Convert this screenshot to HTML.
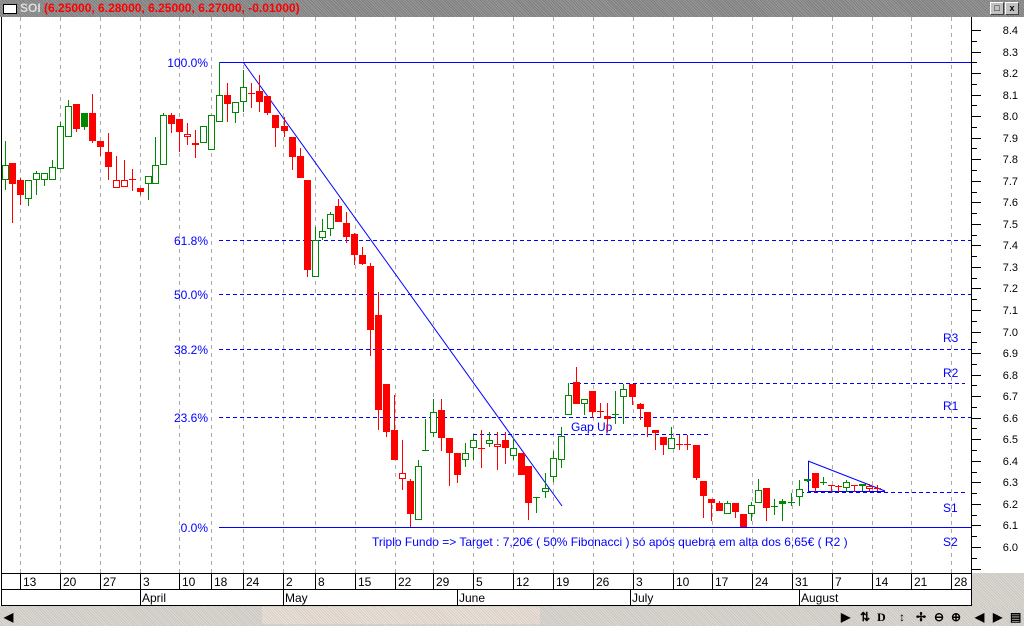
<!DOCTYPE html>
<html><head><meta charset="utf-8"><style>
*{margin:0;padding:0}
body{width:1024px;height:626px;overflow:hidden;background:#fff;font-family:"Liberation Sans",sans-serif;position:relative}
.tb{position:absolute;left:0;top:0;width:1024px;height:17px;background:#8a8a8a;background-image:repeating-linear-gradient(45deg,#9a9a9a 0 1px,#7c7c7c 1px 2px)}
.tb .ic{position:absolute;left:3px;top:4px;width:12px;height:8px;background:#fff;border:1px solid #000}
.tb .t{position:absolute;left:20px;top:1px;font-size:12px;font-weight:bold;color:#ddd;white-space:pre}
.tb .t span{color:#f00}
.btn{position:absolute;top:2px;width:12px;height:11px;background:#c0c0c0;border:1px solid;border-color:#fff #404040 #404040 #fff;font-size:9px;font-weight:bold;text-align:center;line-height:11px}
.gray{position:absolute;background:#d6d2cc;background-image:repeating-linear-gradient(45deg,#ddd9d3 0 1px,#c9c5c0 1px 2px)}
.tool{position:absolute;top:610px;font-size:12px;font-weight:bold}
</style></head><body>
<div class="tb"><div class="ic"></div><div class="t">SOI <span>(6.25000, 6.28000, 6.25000, 6.27000, -0.01000)</span></div>
<div class="btn" style="left:990px">&#9633;</div><div class="btn" style="left:1005px">x</div></div>
<div class="gray" style="left:972px;top:573px;width:52px;height:33px"></div>
<div class="gray" style="left:0;top:606px;width:1024px;height:20px"></div>
<div style="position:absolute;left:262px;top:607px;width:278px;height:17px;background:#e4d8d4;background-image:repeating-linear-gradient(45deg,#ece4d8 0 1px,#d8ccc8 1px 2px)"></div>
<svg id="s" width="1024" height="626" style="position:absolute;left:0;top:0" xmlns="http://www.w3.org/2000/svg"></svg>
<div class="tool" style="left:4px">&#9664;</div>
<div class="tool" style="left:841px">&#9654;</div>
<div class="tool" style="left:860px">&#8645;</div>
<div class="tool" style="left:877px;font-family:'Liberation Serif',serif">D</div>
<div class="tool" style="left:899px">&#8597;</div>
<div class="tool" style="left:916px">&#10018;</div>
<div class="tool" style="left:934px">&#8854;</div>
<div class="tool" style="left:951px">&#8853;</div>
<div class="tool" style="left:975px">&#9664;</div>
<div class="tool" style="left:993px">&#9654;</div>
<div class="tool" style="left:1010px">&#9636;</div>
<script>
var s=document.getElementById('s'),h='';
function L(x1,y1,x2,y2,c,w,d){h+='<line x1="'+x1+'" y1="'+y1+'" x2="'+x2+'" y2="'+y2+'" stroke="'+c+'" stroke-width="'+(w||1)+'"'+(d?' stroke-dasharray="'+d+'"':'')+' shape-rendering="crispEdges"/>';}
function T(x,y,t,c,sz,a){h+='<text x="'+x+'" y="'+y+'" fill="'+c+'" font-size="'+(sz||11)+'" font-family="Liberation Sans,sans-serif"'+(a?' text-anchor="'+a+'"':'')+'>'+t+'</text>';}
var gx=[20,60,100,140,179,211,243,283,315,355,395,433,473,513,553,593,633,673,712,752,792,832,872,911,951];
gx.forEach(function(x){L(x+.5,17,x+.5,573,'#aaa',1,'4 4');});
L(1.5,17,1.5,606,'#000');
L(219,62.5,972,62.5,'#00f');L(219,527.5,972,527.5,'#00f');
[240,294,349,417].forEach(function(y){L(219,y+.5,972,y+.5,'#00f',1,'4 3');});
L(570,383.5,965,383.5,'#00f',1,'4 3');L(473,434.5,710,434.5,'#00f',1,'4 3');L(800,492.5,965,492.5,'#00f',1,'4 3');
[['100.0%',67],['61.8%',245],['50.0%',299],['38.2%',354],['23.6%',422],['0.0%',532]].forEach(function(a){T(208,a[1],a[0],'#00f',12,'end');});
[['R3',342],['R2',377],['R1',410],['S1',512],['S2',546]].forEach(function(a){T(943,a[1],a[0],'#00f',12);});
T(571,431,'Gap Up','#00f',12);
T(372,546,'Triplo Fundo =&gt; Target : 7,20€ ( 50% Fibonacci ) só após quebra em alta dos 6,65€ ( R2 )','#00f',12);
h+='<line x1="243" y1="62" x2="562" y2="506" stroke="#00f" stroke-width="1"/>';
h+='<line x1="808" y1="461" x2="885" y2="491" stroke="#00f" stroke-width="1"/>';
L(808,491.5,885,491.5,'#00f');L(808.5,461,808.5,491,'#00f');
var C=[[5,165,180,141,190,'g'],[12,163,184,163,223,'r'],[20,180,195,178,205,'r'],[28,199,180,180,206,'g'],[36,180,173,171,195,'g'],[44,180,173,173,186,'g'],[52,180,167,160,180,'g'],[60,169,126,122,169,'g'],[68,137,106,100,137,'g'],[76,104,129,104,132,'r'],[84,113,127,113,130,'gf'],[92,113,141,94,143,'r'],[100,141,147,141,156,'r'],[108,152,167,133,180,'r'],[116,180,188,156,188,'rh'],[124,180,187,160,187,'rh'],[132,179,179,169,191,'r'],[140,188,192,188,195,'r'],[148,184,176,176,200,'g'],[155,184,165,137,184,'g'],[163,165,115,113,165,'g'],[171,115,124,113,133,'r'],[179,119,132,119,152,'r'],[187,134,137,123,145,'rh'],[195,143,145,130,158,'rh'],[203,143,126,126,143,'g'],[211,150,115,115,150,'g'],[219,122,95,62,122,'g'],[227,95,104,83,122,'r'],[235,113,102,102,123,'g'],[243,102,87,70,112,'g'],[251,93,93,83,108,'r'],[259,91,102,75,112,'r'],[267,96,113,96,115,'r'],[275,115,128,115,147,'r'],[284,126,131,117,137,'r'],[292,137,157,137,170,'r'],[300,156,178,148,178,'r'],[307,180,270,180,277,'r'],[315,277,240,227,277,'g'],[322,238,231,219,240,'g'],[330,229,214,212,236,'g'],[338,206,222,199,222,'r'],[346,223,237,212,243,'r'],[354,234,255,233,265,'r'],[362,255,264,247,265,'r'],[370,266,330,263,356,'r'],[378,315,410,292,430,'r'],[386,384,432,384,437,'r'],[394,430,460,395,460,'r'],[402,473,479,440,490,'rh'],[410,481,514,479,527,'r'],[418,520,466,460,520,'g'],[425,450,450,419,450,'g'],[433,433,412,399,437,'g'],[441,410,438,399,451,'r'],[449,438,453,438,486,'r'],[457,453,475,453,483,'r'],[465,460,453,443,467,'g'],[473,448,440,435,460,'g'],[481,448,448,430,468,'r'],[489,444,440,432,447,'g'],[497,444,447,432,470,'rh'],[505,440,448,432,464,'r'],[513,456,448,438,460,'g'],[521,453,475,453,475,'r'],[528,466,503,466,520,'r'],[536,497,497,497,513,'g'],[545,492,488,473,498,'g'],[553,477,458,451,482,'g'],[561,460,436,427,468,'g'],[568,415,395,383,415,'g'],[576,382,404,367,404,'r'],[584,404,399,399,415,'g'],[592,391,412,391,418,'r'],[600,411,411,403,418,'r'],[607,416,419,403,432,'r'],[615,414,414,391,424,'g'],[623,397,389,384,424,'g'],[632,384,397,384,405,'r'],[640,404,409,403,420,'r'],[647,412,427,412,437,'r'],[655,430,433,430,450,'r'],[663,437,445,437,455,'r'],[671,449,438,427,449,'g'],[679,444,444,435,450,'r'],[687,444,444,435,450,'r'],[696,445,478,445,480,'r'],[703,481,496,481,518,'r'],[711,499,503,499,521,'r'],[719,503,511,501,511,'r'],[727,514,503,501,514,'g'],[735,503,512,503,518,'r'],[743,514,527,514,527,'r'],[751,514,505,502,521,'g'],[758,503,490,479,503,'g'],[766,488,508,488,521,'r'],[774,506,506,499,515,'g'],[782,501,504,499,521,'gf'],[791,502,502,493,506,'g'],[799,497,489,480,506,'g'],[807,481,479,479,482,'g'],[815,473,488,473,492,'r'],[823,482,482,477,485,'g'],[831,485,485,485,492,'r'],[838,486,486,485,492,'r'],[846,488,482,480,492,'g'],[854,485,485,485,492,'r'],[862,486,484,484,491,'g'],[869,486,489,484,491,'rh'],[877,488,488,485,491,'r']];
C.forEach(function(c){var x=c[0],t=c[5],col=t[0]=='r'?'#f00':'#080',top=Math.min(c[1],c[2]),bot=Math.max(c[1],c[2]);
L(x+.5,c[3],x+.5,c[4],col,1);
if(bot-top<1){L(x-3,top+.5,x+4,top+.5,col,1);}
else if(t=='r'){h+='<rect x="'+(x-3)+'" y="'+top+'" width="7" height="'+(bot-top)+'" fill="#f00"/>';}
else{h+='<rect x="'+(x-2.5)+'" y="'+(top+.5)+'" width="6" height="'+(bot-top-1)+'" fill="'+(t=='gf'?'#080':'#fff')+'" stroke="'+col+'" stroke-width="1"/>';}
});
L(971.5,17,971.5,573,'#000');
for(var i=0;i<=25;i++){var y=Math.round(30+i*21.54);if(y<573){L(972,y+.5,981,y+.5,'#000');if(i<=24)T(1018,y+4,(8.4-i*0.1).toFixed(1),'#000',11,'end');}
var y2=Math.round(30+(i+.5)*21.54);if(y2<573)L(972,y2+.5,977,y2+.5,'#000');}
h+='<rect x="2" y="573" width="970" height="33" fill="#fff"/>';
L(2,573.5,972,573.5,'#000');L(2,589.5,972,589.5,'#000');L(2,605.5,972,605.5,'#000');L(971.5,573,971.5,606,'#000');
var dl=['13','20','27','3','10','18','24','2','8','15','22','29','5','12','19','26','3','10','17','24','31','7','14','21','28'];
gx.forEach(function(x,i){L(x+.5,573,x+.5,589,'#000');T(x+3,586,dl[i],'#000',12);});
[[140,'April'],[283,'May'],[457,'June'],[630,'July'],[799,'August']].forEach(function(m){L(m[0]+.5,589,m[0]+.5,605,'#000');T(m[0]+2,602,m[1],'#000',12);});
s.innerHTML=h;
</script>
</body></html>
